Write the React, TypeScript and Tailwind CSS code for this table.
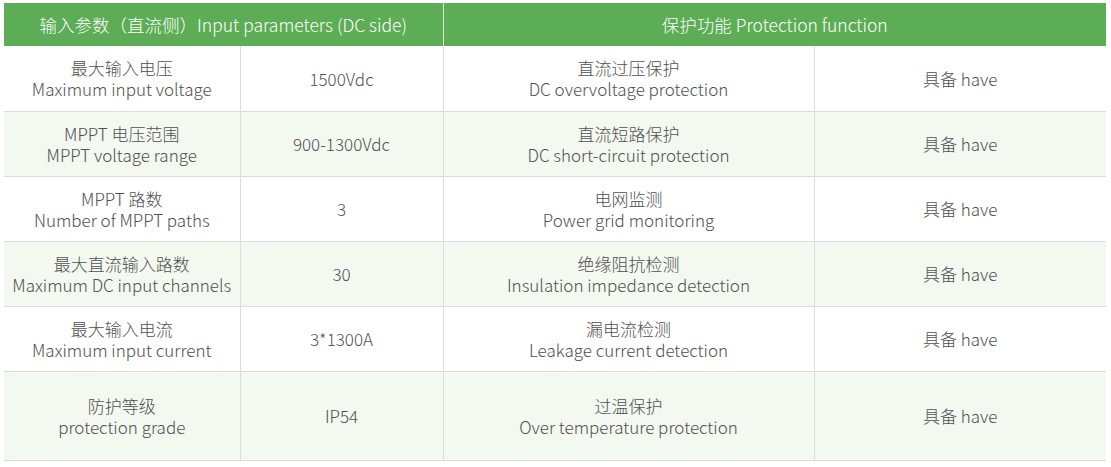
import React from 'react';

type Row = {
  cn: string;
  en: string;
  value: string;
  pcn: string;
  pen: string;
  tall?: boolean;
};

const rows: Row[] = [
  { cn: '最大输入电压', en: 'Maximum input voltage', value: '1500Vdc', pcn: '直流过压保护', pen: 'DC overvoltage protection' },
  { cn: 'MPPT 电压范围', en: 'MPPT voltage range', value: '900-1300Vdc', pcn: '直流短路保护', pen: 'DC short-circuit protection' },
  { cn: 'MPPT 路数', en: 'Number of MPPT paths', value: '3', pcn: '电网监测', pen: 'Power grid monitoring' },
  { cn: '最大直流输入路数', en: 'Maximum DC input channels', value: '30', pcn: '绝缘阻抗检测', pen: 'Insulation impedance detection' },
  { cn: '最大输入电流', en: 'Maximum input current', value: '3*1300A', pcn: '漏电流检测', pen: 'Leakage current detection' },
  { cn: '防护等级', en: 'protection grade', value: 'IP54', pcn: '过温保护', pen: 'Over temperature protection', tall: true },
];

const font = { fontFamily: '"Noto Sans CJK SC", "Noto Sans", sans-serif' };

export default function App() {
  return (
    <div className="w-[1111px] h-[467px] bg-white pt-[3px] pl-[4px]" style={font}>
      <table className="w-[1102px] border-collapse table-fixed text-[17px] font-light text-[#505050] leading-[21px]">
        <colgroup>
          <col className="w-[236px]" />
          <col className="w-[203px]" />
          <col className="w-[371px]" />
          <col className="w-[292px]" />
        </colgroup>
        <thead>
          <tr className="h-[43px] bg-[#5cad55] text-white text-[17.5px]">
            <th colSpan={2} className="font-light border-r border-[#d8e8d4] text-center">
              输入参数（直流侧）Input parameters (DC side)
            </th>
            <th colSpan={2} className="font-light text-center">保护功能 Protection function</th>
          </tr>
        </thead>
        <tbody>
          {rows.map((r, i) => (
            <tr
              key={r.en}
              className={`${r.tall ? 'h-[89px]' : 'h-[65px]'} ${i % 2 === 1 ? 'bg-[#f3f8f1]' : 'bg-white'} border-b border-[#dcdcdc]`}
            >
              <td className="text-center border-r border-[#dcdcdc]">
                <div>{r.cn}</div>
                <div>{r.en}</div>
              </td>
              <td className="text-center border-r border-[#dcdcdc]">{r.value}</td>
              <td className="text-center border-r border-[#dcdcdc]">
                <div>{r.pcn}</div>
                <div>{r.pen}</div>
              </td>
              <td className="text-center">具备 have</td>
            </tr>
          ))}
        </tbody>
      </table>
    </div>
  );
}
